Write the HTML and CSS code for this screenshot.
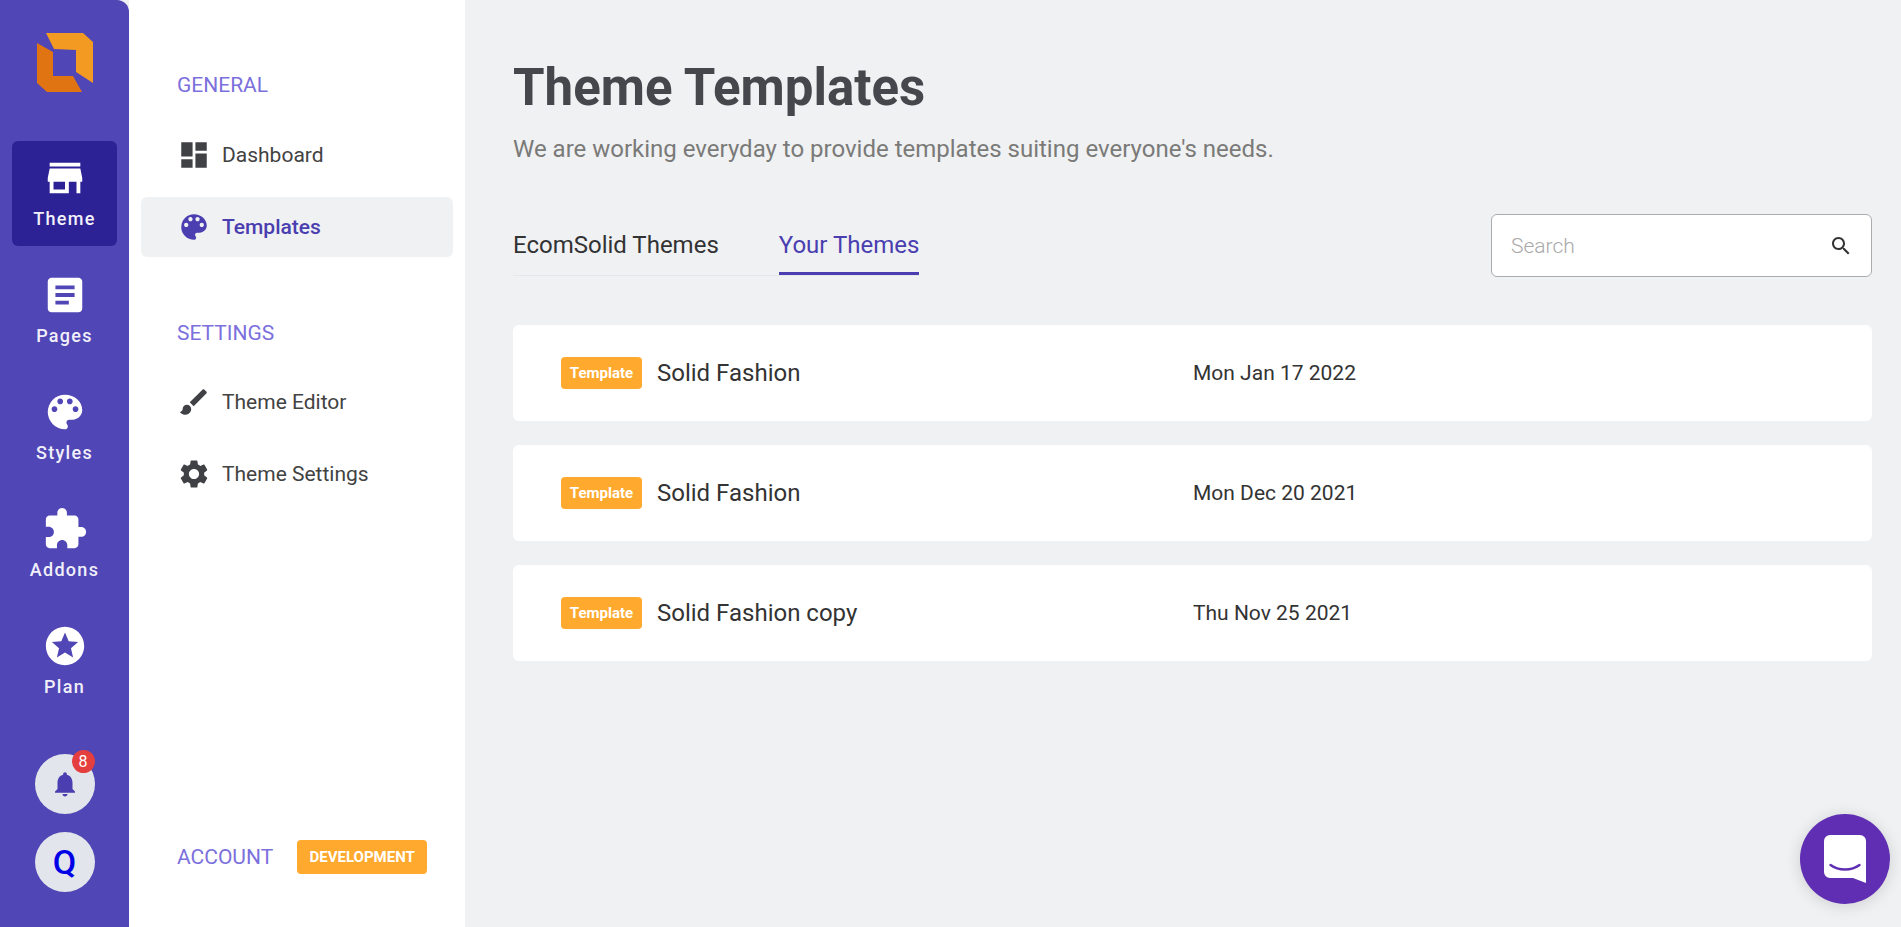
FILE: index.html
```html
<!DOCTYPE html>
<html lang="en">
<head>
<meta charset="utf-8">
<title>Theme Templates</title>
<link rel="stylesheet" href="styles.css">
</head>
<body>
<div class="shell">
  <nav class="rail">
    <div class="logo">
      <svg viewBox="37 33 56 60" width="56" height="60"><polygon fill="#f29a21" points="46,33 83,33 93,42 93,83 76,72 76,50 54,49"/><polygon fill="#e07312" points="37,43 53,52 53,76 73,76 82,92 47,92 37,83"/></svg>
    </div>
    <a class="rail-item active"><svg class="rail-icon" viewBox="0 0 24 24"><path d="M20 4H4v2h16V4zm1 10v-2l-1-5H4l-1 5v2h1v6h10v-6h4v6h2v-6h1zm-9 4H6v-4h6v4z"/></svg><span>Theme</span></a>
    <a class="rail-item"><svg class="rail-icon" viewBox="0 0 24 24"><path d="M19 3H5c-1.1 0-2 .9-2 2v14c0 1.1.9 2 2 2h14c1.1 0 2-.9 2-2V5c0-1.1-.9-2-2-2zm-5 14H7v-2h7v2zm3-4H7v-2h10v2zm0-4H7V7h10v2z"/></svg><span>Pages</span></a>
    <a class="rail-item"><svg class="rail-icon" viewBox="0 0 24 24"><path d="M12 3a9 9 0 0 0 0 18c.83 0 1.5-.67 1.5-1.5 0-.39-.15-.74-.39-1.01-.23-.26-.38-.61-.38-.99 0-.83.67-1.5 1.5-1.5H16c2.76 0 5-2.24 5-5 0-4.42-4.03-8-9-8zm-5.5 9c-.83 0-1.5-.67-1.5-1.5S5.67 9 6.5 9 8 9.67 8 10.5 7.33 12 6.5 12zm3-4C8.67 8 8 7.33 8 6.5S8.67 5 9.5 5s1.5.67 1.5 1.5S10.33 8 9.5 8zm5 0c-.83 0-1.5-.67-1.5-1.5S13.67 5 14.5 5s1.5.67 1.5 1.5S15.33 8 14.5 8zm3 4c-.83 0-1.5-.67-1.5-1.5S16.67 9 17.5 9s1.5.67 1.5 1.5-.67 1.5-1.5 1.5z"/></svg><span>Styles</span></a>
    <a class="rail-item"><svg class="rail-icon" viewBox="0 0 24 24"><path d="M20.5 11H19V7c0-1.1-.9-2-2-2h-4V3.5C13 2.12 11.88 1 10.5 1S8 2.12 8 3.5V5H4c-1.1 0-1.99.9-1.99 2v3.8H3.5c1.49 0 2.7 1.21 2.7 2.7s-1.21 2.7-2.7 2.7H2V20c0 1.1.9 2 2 2h3.8v-1.5c0-1.49 1.21-2.7 2.7-2.7 1.49 0 2.7 1.21 2.7 2.7V22H17c1.1 0 2-.9 2-2v-4h1.5c1.38 0 2.5-1.12 2.5-2.5S21.88 11 20.5 11z"/></svg><span>Addons</span></a>
    <a class="rail-item"><svg class="rail-icon" viewBox="0 0 24 24"><path d="M11.99 2C6.47 2 2 6.48 2 12s4.47 10 9.99 10C17.52 22 22 17.52 22 12S17.52 2 11.99 2zm4.24 16L12 15.45 7.77 18l1.12-4.81-3.73-3.23 4.92-.42L12 5l1.92 4.53 4.92.42-3.73 3.23L16.23 18z"/></svg><span>Plan</span></a>
    <div class="rail-bottom">
      <div class="circle bell">
        <svg class="bell-icon" viewBox="0 0 24 24"><path d="M12 22c1.1 0 2-.9 2-2h-4c0 1.1.9 2 2 2zm6-6v-5c0-3.07-1.63-5.64-4.5-6.32V4c0-.83-.67-1.5-1.5-1.5s-1.5.67-1.5 1.5v.68C7.64 5.36 6 7.92 6 11v5l-2 2v1h16v-1l-2-2z"/></svg>
        <span class="count">8</span>
      </div>
      <div class="circle avatar">Q</div>
    </div>
  </nav>

  <aside class="panel">
    <div class="section-label first">GENERAL</div>
    <a class="link"><svg class="link-icon" viewBox="0 0 24 24"><path d="M3 13h8V3H3v10zm0 8h8v-6H3v6zm10 0h8V11h-8v10zm0-18v6h8V3h-8z"/></svg><span>Dashboard</span></a>
    <a class="link current"><svg class="link-icon" viewBox="0 0 24 24"><path d="M12 3a9 9 0 0 0 0 18c.83 0 1.5-.67 1.5-1.5 0-.39-.15-.74-.39-1.01-.23-.26-.38-.61-.38-.99 0-.83.67-1.5 1.5-1.5H16c2.76 0 5-2.24 5-5 0-4.42-4.03-8-9-8zm-5.5 9c-.83 0-1.5-.67-1.5-1.5S5.67 9 6.5 9 8 9.67 8 10.5 7.33 12 6.5 12zm3-4C8.67 8 8 7.33 8 6.5S8.67 5 9.5 5s1.5.67 1.5 1.5S10.33 8 9.5 8zm5 0c-.83 0-1.5-.67-1.5-1.5S13.67 5 14.5 5s1.5.67 1.5 1.5S15.33 8 14.5 8zm3 4c-.83 0-1.5-.67-1.5-1.5S16.67 9 17.5 9s1.5.67 1.5 1.5-.67 1.5-1.5 1.5z"/></svg><span>Templates</span></a>
    <div class="section-label second">SETTINGS</div>
    <a class="link"><svg class="link-icon" viewBox="0 0 24 24"><path d="M7 14c-1.66 0-3 1.34-3 3 0 1.31-1.16 2-2 2 .92 1.22 2.49 2 4 2 2.21 0 4-1.79 4-4 0-1.66-1.34-3-3-3zm13.71-9.37l-1.34-1.34c-.39-.39-1.02-.39-1.41 0L9 12.25 11.75 15l8.96-8.96c.39-.39.39-1.02 0-1.41z"/></svg><span>Theme Editor</span></a>
    <a class="link"><svg class="link-icon" viewBox="0 0 24 24"><path d="M19.14 12.94c.04-.3.06-.61.06-.94 0-.32-.02-.64-.07-.94l2.03-1.58c.18-.14.23-.41.12-.61l-1.92-3.32c-.12-.22-.37-.29-.59-.22l-2.39.96c-.5-.38-1.03-.7-1.62-.94l-.36-2.54c-.04-.24-.24-.41-.48-.41h-3.84c-.24 0-.43.17-.47.41l-.36 2.54c-.59.24-1.13.57-1.62.94l-2.39-.96c-.22-.08-.47 0-.59.22L2.74 8.87c-.12.21-.08.47.12.61l2.03 1.58c-.05.3-.09.63-.09.94s.02.64.07.94l-2.03 1.58c-.18.14-.23.41-.12.61l1.92 3.32c.12.22.37.29.59.22l2.39-.96c.5.38 1.03.7 1.62.94l.36 2.54c.05.24.24.41.48.41h3.84c.24 0 .44-.17.47-.41l.36-2.54c.59-.24 1.13-.56 1.62-.94l2.39.96c.22.08.47 0 .59-.22l1.92-3.32c.12-.22.07-.47-.12-.61l-2.01-1.58zM12 15.6c-1.98 0-3.6-1.62-3.6-3.6s1.62-3.6 3.6-3.6 3.6 1.62 3.6 3.6-1.62 3.6-3.6 3.6z"/></svg><span>Theme Settings</span></a>
    <div class="account">
      <span class="section-text">ACCOUNT</span>
      <span class="dev-badge">DEVELOPMENT</span>
    </div>
  </aside>

  <main class="main">
    <h1 class="title">Theme Templates</h1>
    <p class="subtitle">We are working everyday to provide templates suiting everyone's needs.</p>
    <div class="toolbar">
      <div class="tabs">
        <a class="tab">EcomSolid Themes</a>
        <a class="tab selected">Your Themes</a>
      </div>
      <label class="search">
        <input class="search-input" type="text" placeholder="Search">
        <svg class="search-icon" viewBox="0 0 24 24"><path d="M15.5 14h-.79l-.28-.27C15.41 12.59 16 11.11 16 9.5 16 5.91 13.09 3 9.5 3S3 5.91 3 9.5 5.91 16 9.5 16c1.61 0 3.09-.59 4.23-1.57l.27.28v.79l5 4.99L20.49 19l-4.99-5zm-6 0C7.01 14 5 11.99 5 9.5S7.01 5 9.5 5 14 7.01 14 9.5 11.99 14 9.5 14z"/></svg>
      </label>
    </div>
    <div class="rows">
      <div class="row"><div class="row-name"><span class="tag">Template</span><span class="name">Solid Fashion</span></div><div class="date">Mon Jan 17 2022</div></div>
      <div class="row"><div class="row-name"><span class="tag">Template</span><span class="name">Solid Fashion</span></div><div class="date">Mon Dec 20 2021</div></div>
      <div class="row"><div class="row-name"><span class="tag">Template</span><span class="name">Solid Fashion copy</span></div><div class="date">Thu Nov 25 2021</div></div>
    </div>
  </main>
</div>
<button class="chat" type="button" aria-label="Chat">
  <svg viewBox="0 0 42 48" width="42" height="48"><path fill="#fff" d="M6 0h30a6 6 0 0 1 6 6v42l-13-5H6a6 6 0 0 1-6-6V6a6 6 0 0 1 6-6z"/><path fill="none" stroke="#5f2eb2" stroke-width="2.400" stroke-linecap="round" d="M6.500 30c8 6 21 6 29 0"/></svg>
</button>
</body>
</html>
```

FILE: styles.css
```css
* { box-sizing: border-box; }
html, body { margin: 0; height: 100%; overflow: hidden; }
body { font-family: Roboto, "Liberation Sans", sans-serif; background: #f0f1f3; color: #333; }
.shell { display: flex; height: 100vh; }

.rail { width: 129px; flex: none; background: #5046b5; border-top-right-radius: 12px; display: flex; flex-direction: column; align-items: center; color: #fff; }
.logo { height: 141px; padding-top: 33px; display: flex; justify-content: center; align-self: stretch; }
.logo svg { display: block; }
.rail-item { width: 105px; height: 105px; margin-bottom: 12px; border-radius: 6px; padding-top: 14px; display: flex; flex-direction: column; align-items: center; font-size: 18px; font-weight: 500; letter-spacing: 1.3px; line-height: 22px; color: #f1f0fa; }
.rail-item.active { background: #2d2196; }
.rail-icon { width: 46px; height: 46px; fill: #fff; margin-bottom: 7px; flex: none; }
.rail-bottom { margin-top: auto; padding-bottom: 35px; display: flex; flex-direction: column; gap: 18px; }
.circle { width: 60px; height: 60px; border-radius: 50%; background: #e2e6ec; display: flex; align-items: center; justify-content: center; position: relative; }
.bell-icon { width: 30px; height: 30px; fill: #4a3eb0; }
.count { position: absolute; top: -4px; right: 0; width: 23px; height: 23px; border-radius: 50%; background: #e53e3e; color: #fff; font-size: 16px; line-height: 23px; text-align: center; }
.avatar { color: #0000e6; font-size: 34px; font-weight: 500; }

.panel { width: 336px; flex: none; background: #fff; padding: 0 12px; display: flex; flex-direction: column; }
.section-label, .section-text { font-size: 21px; color: #7b70dc; line-height: 24px; }
.section-label { padding-left: 36px; }
.section-label.first { margin-top: 73px; margin-bottom: 28px; }
.section-label.second { margin-top: 52px; margin-bottom: 27px; }
.link { height: 60px; margin-bottom: 12px; border-radius: 6px; padding-left: 36px; display: flex; align-items: center; gap: 11px; font-size: 21px; color: #424242; }
.link-icon { width: 34px; height: 34px; fill: #404145; flex: none; }
.link.current { background: #f0f1f3; color: #4a3eb0; font-weight: 500; }
.link.current .link-icon { fill: #4a3eb0; }
.account { margin-top: auto; margin-bottom: 53px; padding-left: 36px; display: flex; align-items: center; gap: 24px; }
.dev-badge { background: #ffa92e; color: #fff; font-size: 15px; font-weight: 700; height: 34px; width: 130px; border-radius: 4px; display: flex; align-items: center; justify-content: center; }

.main { flex: 1; padding: 0 29px 0 48px; min-width: 0; }
.title { margin: 57px 0 0; font-size: 51px; line-height: 62px; font-weight: 700; color: #45474c; }
.subtitle { margin: 14px 0 0; font-size: 24px; line-height: 32px; color: #7a7a78; }
.toolbar { margin-top: 49px; display: flex; justify-content: space-between; align-items: flex-end; height: 63px; }
.tabs { display: flex; gap: 60px; margin-bottom: 1px; border-bottom: 1px solid #e6e7ea; }
.tab { font-size: 24px; line-height: 32px; color: #333; padding-bottom: 11px; border-bottom: 3px solid transparent; }
.tab.selected { color: #4a3eb0; border-bottom-color: #4a3eb0; }
.search { width: 381px; height: 63px; background: #fff; border: 1px solid #aaacb0; border-radius: 6px; display: flex; align-items: center; padding: 0 18px 0 19px; }
.search-input { flex: 1; min-width: 0; border: 0; outline: 0; padding: 0; background: none; font: 300 21px Roboto, sans-serif; color: #333; }
.search-input::placeholder { color: #a9a9a9; opacity: 1; }
.search-icon { width: 24px; height: 24px; fill: #333; flex: none; }

.rows { margin-top: 48px; display: flex; flex-direction: column; gap: 24px; }
.row { height: 96px; background: #fff; border-radius: 6px; padding-left: 48px; display: flex; align-items: center; }
.row-name { width: 632px; display: flex; align-items: center; gap: 15px; }
.tag { width: 81px; height: 32px; background: #ffa92e; color: #fff; border-radius: 4px; font-size: 15px; font-weight: 700; display: flex; align-items: center; justify-content: center; }
.name { font-size: 24px; color: #333; }
.date { font-size: 21px; color: #333; }

.chat { position: fixed; left: 1800px; top: 814px; width: 90px; height: 90px; border: 0; padding: 0; border-radius: 50%; background: #5f2eb2; box-shadow: 0 2px 16px rgba(0,0,0,.14); display: flex; align-items: center; justify-content: center; }
.chat svg { display: block; }
```
